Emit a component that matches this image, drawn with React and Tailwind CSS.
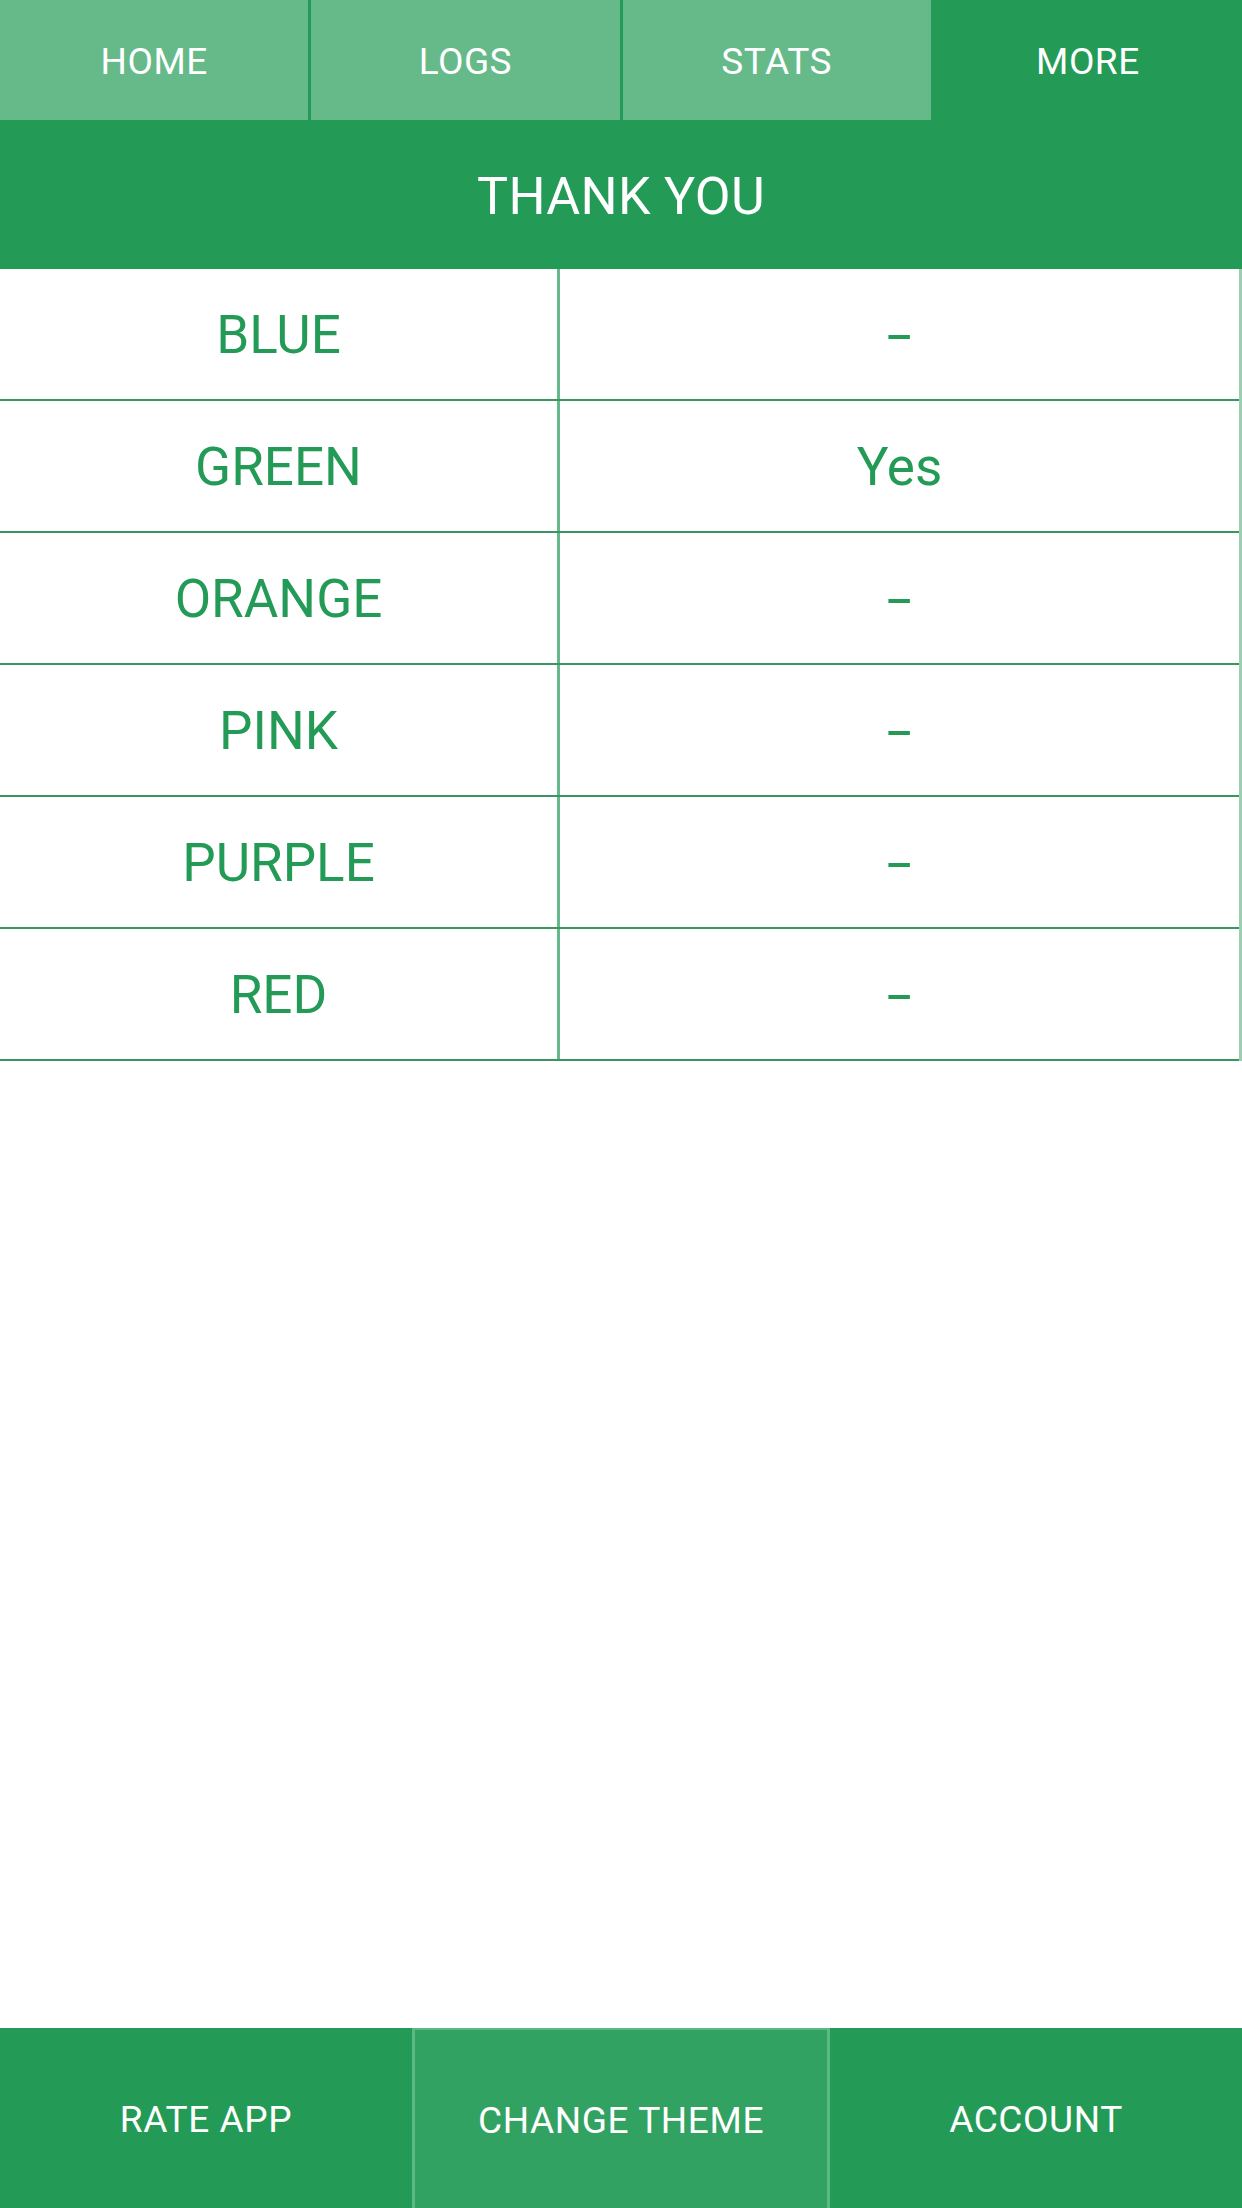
import React from 'react'

const tabs = [
  { label: 'HOME', active: false },
  { label: 'LOGS', active: false },
  { label: 'STATS', active: false },
  { label: 'MORE', active: true },
]

const rows = [
  { color: 'BLUE', value: '-' },
  { color: 'GREEN', value: 'Yes' },
  { color: 'ORANGE', value: '-' },
  { color: 'PINK', value: '-' },
  { color: 'PURPLE', value: '-' },
  { color: 'RED', value: '-' },
]

export default function App() {
  return (
    <div
      className="flex flex-col w-[1242px] h-[2208px] bg-white overflow-hidden"
      style={{ fontFamily: 'Roboto, "Liberation Sans", sans-serif' }}
    >
      {/* top tabs */}
      <div className="grid grid-cols-4 gap-[3px] h-[120px] bg-[#239b56] flex-shrink-0">
        {tabs.map((t) => (
          <div
            key={t.label}
            className={`flex items-center justify-center pt-1 text-[37px] tracking-[0.5px] text-white ${
              t.active ? 'bg-[#239b56]' : 'bg-[#66ba8a]'
            }`}
          >
            {t.label}
          </div>
        ))}
      </div>

      {/* title */}
      <div className="flex items-center justify-center pt-1 h-[149px] bg-[#239b56] text-white text-[52px] tracking-[0.3px] flex-shrink-0">
        THANK YOU
      </div>

      {/* color table */}
      <div className="flex flex-col w-[1242px] border-r-[3px] border-[#9ad0b0]">
        {rows.map((r) => (
          <div key={r.color} className="flex h-[132px] border-b-[2px] border-[#3a9560]">
            <div className="flex items-center justify-center pt-1 w-[560px] border-r-[3px] border-[#66ba8a] text-[53px] text-[#239b56]">
              {r.color}
            </div>
            <div className="flex flex-1 items-center justify-center pt-1 text-[53px] text-[#239b56]">
              {r.value === '-' ? <span className="inline-block scale-x-[1.7]">-</span> : r.value}
            </div>
          </div>
        ))}
      </div>

      <div className="flex-1" />

      {/* bottom actions */}
      <div className="flex h-[180px] bg-[#239b56] flex-shrink-0">
        <div className="flex w-[412px] items-center justify-center pt-1 text-[37px] tracking-[0.6px] text-white">
          RATE APP
        </div>
        <div className="flex w-[418px] items-center justify-center pt-1 text-[37px] tracking-[0.6px] text-white bg-[#32a263] border-x-[3px] border-t-2 border-[#6fc291]/70">
          CHANGE THEME
        </div>
        <div className="flex flex-1 items-center justify-center pt-1 text-[37px] tracking-[0.6px] text-white">
          ACCOUNT
        </div>
      </div>
    </div>
  )
}
